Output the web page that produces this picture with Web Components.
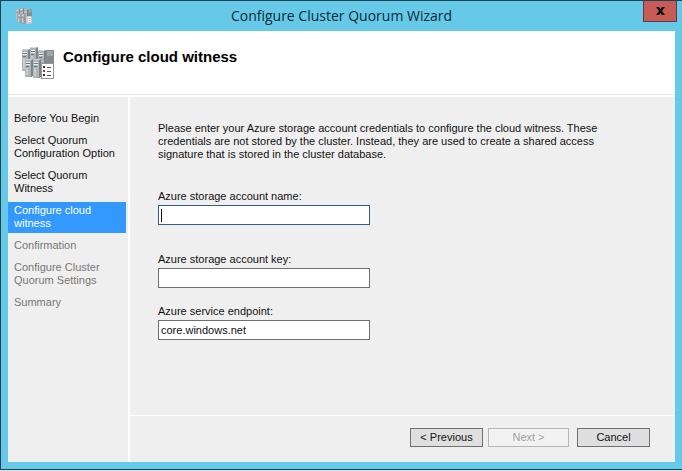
<!DOCTYPE html>
<html lang="en">
<head>
<meta charset="utf-8">
<title>Configure Cluster Quorum Wizard</title>
<style>
    html, body {
        margin: 0;
        height: 100%;
    }

    body {
        box-sizing: border-box;
        padding-bottom: 1px;
        background: #d5e4ea;
        font: 11px/13px "Liberation Sans", Arial, sans-serif;
        color: #111;
    }
</style>
</head>
<body>

<wizard-window>
    <title-bar slot="title">Configure Cluster Quorum Wizard</title-bar>
    <page-header slot="header">Configure cloud witness</page-header>

    <step-list slot="steps">
        <step-item state="done">Before You Begin</step-item>
        <step-item state="done">Select Quorum Configuration Option</step-item>
        <step-item state="done">Select Quorum Witness</step-item>
        <step-item state="current">Configure cloud witness</step-item>
        <step-item>Confirmation</step-item>
        <step-item>Configure Cluster Quorum Settings</step-item>
        <step-item>Summary</step-item>
    </step-list>

    <witness-form></witness-form>

    <wizard-buttons slot="footer"></wizard-buttons>
</wizard-window>

<script>
class ClusterIcon extends HTMLElement {

    constructor() {
        super();
        this.shadow = this.attachShadow({mode: 'open'});
        this.render();
    }

    tower(x, y, h) {
        return `
            <path d="M${x} ${y + 1}l2-1h6v${h - 1}l-2 1h-6z" fill="#7d8588"/>
            <path d="M${x} ${y + 1}h6v${h - 1}h-6z" fill="#aeb5b8"/>
            <path d="M${x} ${y + 1}l2-1h6l-2 1z" fill="#d5d9da"/>
            <path d="M${x + 1} ${y + 3}h4v3h-4z" fill="#eef1f2"/>
            <path d="M${x + 1} ${y + 4}h4v1h-4zM${x + 1} ${y + 7}h3v1h-3z" fill="#6a7377"/>
            <path d="M${x + 1} ${y + 9}h2v${h - 11}h-2z" fill="#c6cccf"/>
        `;
    }

    render() {
        this.shadow.innerHTML =
        `
        <style>
            :host{
                display:block;
                width:32px;
                height:32px;
            }

            svg{
                display:block;
                width:100%;
                height:100%;
            }
        </style>

        <svg viewBox="0 0 32 32" aria-hidden="true">
            <path d="M22 3h10v15H22z" fill="#858b8d"/>
            <path d="M25 4h6v5h-6z" fill="#9fa5a7"/>
            ${this.tower(0, 2, 22)}
            ${this.tower(8, 0, 22)}
            ${this.tower(16, 3, 19)}
            ${this.tower(3, 12, 18)}
            ${this.tower(11, 12, 19)}
            <path d="M7 29h3v1H7zM15 30h3v1h-3z" fill="#6fae5c"/>
            <path d="M19 16h13v16H19z" fill="#8f9598"/>
            <path d="M20 17h11v14H20z" fill="#fff"/>
            <path d="M21 19h2v2h-2zM21 27h2v2h-2z" fill="#333"/>
            <path d="M21 23h2v2h-2z" fill="#d01838"/>
            <path d="M25 20h4v1h-4zM25 24h4v1h-4zM25 28h4v1h-4z" fill="#555b70"/>
        </svg>
        `;
    }
}

customElements.define('cluster-icon', ClusterIcon);

class TitleBar extends HTMLElement {

    constructor() {
        super();
        this.shadow = this.attachShadow({mode: 'open'});
        this.render();
    }

    render() {
        this.shadow.innerHTML =
        `
        <style>
            :host{
                display:grid;
                grid-template-columns:1fr auto 1fr;
                align-items:center;
                height:30px;
                padding:0 5px;
            }

            cluster-icon{
                width:16px;
                height:16px;
                margin-left:10px;
            }

            .title{
                font:14px/20px "Open Sans", "Noto Sans", sans-serif;
                color:#0b2a36;
            }

            button{
                display:flex;
                align-items:center;
                justify-content:center;
                align-self:start;
                justify-self:end;
                box-sizing:border-box;
                width:34px;
                height:21px;
                padding:0;
                border:1px solid #5b3a42;
                border-top:0;
                background:#c75c57;
            }
        </style>

        <cluster-icon></cluster-icon>
        <span class="title"><slot></slot></span>
        <button type="button" aria-label="Close">
            <svg width="9" height="8" viewBox="0 0 9 8">
                <path d="M0 0h3l1.500 2 1.500-2h3L6 4l3 4H6L4.500 6 3 8H0l3-4z" fill="#111"/>
            </svg>
        </button>
        `;
    }
}

customElements.define('title-bar', TitleBar);

class PageHeader extends HTMLElement {

    constructor() {
        super();
        this.shadow = this.attachShadow({mode: 'open'});
        this.render();
    }

    render() {
        this.shadow.innerHTML =
        `
        <style>
            :host{
                display:flex;
                gap:9px;
                padding:16px 14px 15px;
                border-bottom:1px solid #e6e6e6;
                background:#fff;
            }

            h1{
                margin:0;
                font-size:15px;
                line-height:20px;
                color:#000;
            }
        </style>

        <cluster-icon></cluster-icon>
        <h1><slot></slot></h1>
        `;
    }
}

customElements.define('page-header', PageHeader);

class StepItem extends HTMLElement {

    constructor() {
        super();
        this.shadow = this.attachShadow({mode: 'open'});
        this.render();
    }

    connectedCallback() {
        this.setAttribute('role', 'listitem');
    }

    render() {
        this.shadow.innerHTML =
        `
        <style>
            :host{
                display:block;
                padding:2px 8px 3px 6px;
                color:#777;
            }

            :host([state="done"]){
                color:#111;
            }

            :host([state="current"]){
                background:#3399ff;
                color:#fff;
            }
        </style>

        <slot></slot>
        `;
    }
}

customElements.define('step-item', StepItem);

class StepList extends HTMLElement {

    constructor() {
        super();
        this.shadow = this.attachShadow({mode: 'open'});
        this.render();
    }

    connectedCallback() {
        this.setAttribute('role', 'list');
    }

    render() {
        this.shadow.innerHTML =
        `
        <style>
            :host{
                display:flex;
                flex-direction:column;
                gap:4px;
                padding:13px 2px 13px 0;
            }
        </style>

        <slot></slot>
        `;
    }
}

customElements.define('step-list', StepList);

class TextField extends HTMLElement {

    constructor() {
        super();
        this.shadow = this.attachShadow({mode: 'open'});
        this.render();
    }

    render() {
        this.shadow.innerHTML =
        `
        <style>
            :host{
                display:flex;
                flex-direction:column;
                gap:2px;
            }

            input{
                box-sizing:border-box;
                width:100%;
                height:20px;
                padding:0 2px;
                border:1px solid #6f6f6f;
                border-radius:0;
                outline:0;
                background:#fff;
                font:inherit;
                color:#111;
            }

            :host([active]) input{
                border-color:#2f5d87;
            }

            /* caret of the empty field */
            :host([active]) input:placeholder-shown{
                background:linear-gradient(#000, #000) 2px 3px / 1px 13px no-repeat #fff;
                caret-color:transparent;
            }
        </style>

        <label for="field"><slot></slot></label>
        <input id="field" type="text" placeholder=" " autocomplete="off">
        `;

        this.shadow.querySelector("input").value = this.getAttribute("value") || "";
    }
}

customElements.define('text-field', TextField);

class WitnessForm extends HTMLElement {

    constructor() {
        super();
        this.shadow = this.attachShadow({mode: 'open'});
        this.render();
    }

    render() {
        this.shadow.innerHTML =
        `
        <style>
            :host{
                display:block;
                padding:25px 28px;
            }

            p{
                max-width:440px;
                margin:0 0 29px;
            }

            text-field{
                max-width:212px;
                margin-bottom:17px;
            }

            text-field[active]{
                margin-bottom:28px;
            }
        </style>

        <p>Please enter your Azure storage account credentials to configure the cloud witness. These credentials are not stored by the cluster. Instead, they are used to create a shared access signature that is stored in the cluster database.</p>

        <text-field active>Azure storage account name:</text-field>
        <text-field>Azure storage account key:</text-field>
        <text-field value="core.windows.net">Azure service endpoint:</text-field>
        `;
    }
}

customElements.define('witness-form', WitnessForm);

class WizardButtons extends HTMLElement {

    constructor() {
        super();
        this.shadow = this.attachShadow({mode: 'open'});
        this.render();
    }

    render() {
        this.shadow.innerHTML =
        `
        <style>
            :host{
                display:flex;
                justify-content:flex-end;
                gap:5px;
                padding:12px 25px 15px;
                border-top:1px solid #fff;
            }

            button{
                box-sizing:border-box;
                width:73px;
                height:19px;
                padding:0;
                border:1px solid #6f6f6f;
                border-radius:0;
                background:#dfdfdf;
                font:inherit;
                color:#111;
            }

            .next{
                width:81px;
            }

            .next:disabled{
                border-color:#b5b5b5;
                background:#f2f2f2;
                color:#a0a0a0;
            }

            .cancel{
                margin-left:3px;
            }
        </style>

        <button type="button">&lt; Previous</button>
        <button type="button" class="next" disabled>Next &gt;</button>
        <button type="button" class="cancel">Cancel</button>
        `;
    }
}

customElements.define('wizard-buttons', WizardButtons);

class WizardWindow extends HTMLElement {

    constructor() {
        super();
        this.shadow = this.attachShadow({mode: 'open'});
        this.render();
    }

    render() {
        this.shadow.innerHTML =
        `
        <style>
            :host{
                display:flex;
                flex-direction:column;
                box-sizing:border-box;
                min-height:100%;
                border:1px solid #1c4254;
                border-right:0;
                background:#66c9e8;
            }

            .client{
                flex:1;
                display:flex;
                flex-direction:column;
                margin:0 7px 7px;
                background:#fff;
            }

            .body{
                flex:1;
                display:grid;
                grid-template-columns:120px 1fr;
                gap:2px;
                margin-top:2px;
            }

            nav, main{
                background:#efefef;
            }

            main{
                display:flex;
                flex-direction:column;
            }

            .page{
                flex:1;
            }
        </style>

        <slot name="title"></slot>
        <div class="client">
            <slot name="header"></slot>
            <div class="body">
                <nav><slot name="steps"></slot></nav>
                <main>
                    <div class="page"><slot></slot></div>
                    <slot name="footer"></slot>
                </main>
            </div>
        </div>
        `;
    }
}

customElements.define('wizard-window', WizardWindow);
</script>
</body>
</html>
